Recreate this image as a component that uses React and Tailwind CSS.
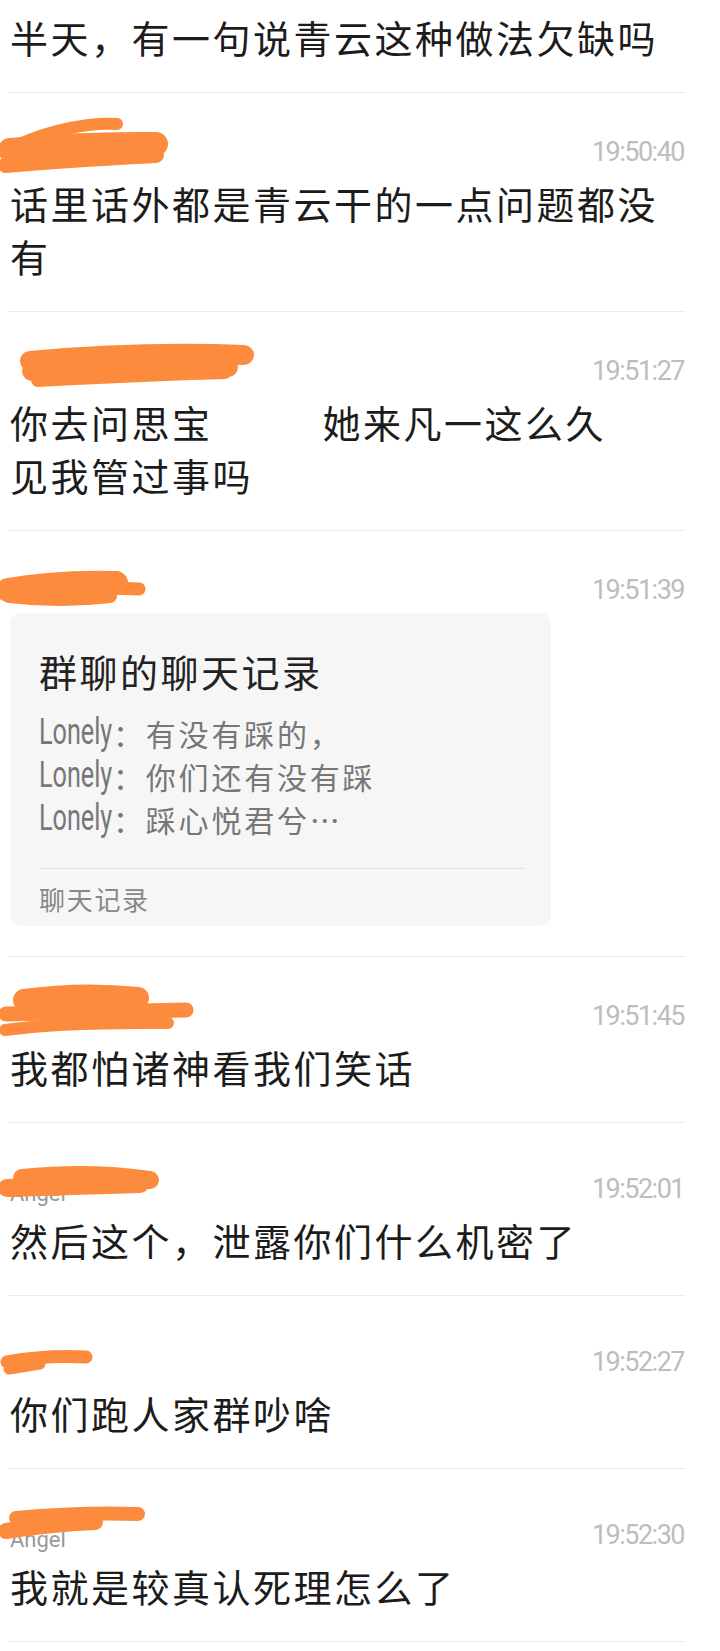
import React from 'react';

const ORANGE = '#fd8b3d';

// each scribble is drawn in a 260px wide box laid over the sender name
const scribbles = {
  a: {
    top: 'top-[-26px]',
    h: 80,
    strokes: [
      ['M117 14 C 90 12, 52 20, 22 33', 12],
      ['M10 40 Q 80 33 156 34', 24],
      ['M6 55 Q 60 50 156 45', 16],
    ],
  },
  b: {
    top: 'top-[-29px]',
    h: 80,
    strokes: [
      ['M30 35 Q 140 25 244 29', 20],
      ['M32 45 L 228 41', 20],
      ['M38 54 Q 130 49 225 46', 14],
    ],
  },
  c: {
    top: 'top-[-18px]',
    h: 70,
    strokes: [
      ['M8 34 Q 60 25 116 27', 24],
      ['M9 40 Q 60 46 110 40', 14],
      ['M110 32 L 139 33', 13],
    ],
  },
  d: {
    top: 'top-[-24px]',
    h: 80,
    strokes: [
      ['M24 24 Q 80 16 138 22', 22],
      ['M6 38 L 186 34', 15],
      ['M5 54 Q 60 46 168 47', 12],
      ['M60 46 L 150 44', 16],
    ],
  },
  e: {
    top: 'top-[-17px]',
    h: 60,
    strokes: [
      ['M22 22 Q 90 15 150 24', 18],
      ['M7 32 Q 70 30 140 28', 18],
    ],
  },
  f: {
    top: 'top-[-10px]',
    h: 60,
    strokes: [
      ['M7 26 Q 45 19 86 21', 13],
      ['M9 33 L 40 28', 11],
    ],
  },
  g: {
    top: 'top-[-28px]',
    h: 70,
    strokes: [
      ['M16 27 Q 80 21 138 23', 14],
      ['M6 40 Q 50 33 95 31', 16],
      ['M30 32 L 95 28', 14],
    ],
  },
};

function Scribble({ id }) {
  const s = scribbles[id];
  return (
    <svg
      className={`absolute left-[-8px] ${s.top} pointer-events-none`}
      width="260"
      height={s.h}
      viewBox={`0 0 260 ${s.h}`}
    >
      {s.strokes.map(([d, w], i) => (
        <path key={i} d={d} stroke={ORANGE} strokeWidth={w} strokeLinecap="round" fill="none" />
      ))}
    </svg>
  );
}

function Header({ time, scribble, name }) {
  return (
    <div className="relative h-[32px] flex items-center justify-between">
      <span className="pl-[2px] text-[22px] leading-none text-[#999] translate-y-[5px]">{name || ''}</span>
      <Scribble id={scribble} />
      <span className="text-[27px] tracking-[-1.5px] text-[#bdbdbd] leading-none pr-[1px]">{time}</span>
    </div>
  );
}

const msg = 'pl-[2px] text-[38px] tracking-[2.5px] leading-[53px] text-[#1c1c1c]';

function Entry({ time, scribble, name, lower, children }) {
  return (
    <div className={`border-b border-[#ebebeb] ${lower ? 'pt-[50px]' : 'pt-[43px]'} pb-[25px]`}>
      <Header time={time} scribble={scribble} name={name} />
      <div className={`mt-[12px] ${msg}`}>{children}</div>
    </div>
  );
}

function Lonely({ text }) {
  return (
    <div className="h-[43px] flex items-center text-[#777]">
      <span className="inline-block w-[74px] overflow-visible">
        <span className="inline-block origin-left scale-x-[0.7] text-[36px] leading-none font-['Roboto',sans-serif]">
          Lonely
        </span>
      </span>
      <span className="text-[30px] tracking-[2.8px] leading-none font-['Noto_Sans_CJK_SC',sans-serif]">：{text}</span>
    </div>
  );
}

export default function App() {
  const messages = [
    { time: '19:51:45', scribble: 'd', text: '我都怕诸神看我们笑话' },
    { time: '19:52:01', scribble: 'e', name: 'Angel', lower: true, text: '然后这个，泄露你们什么机密了' },
    { time: '19:52:27', scribble: 'f', lower: true, text: '你们跑人家群吵啥' },
    { time: '19:52:30', scribble: 'g', name: 'Angel', lower: true, text: '我就是较真认死理怎么了' },
  ];

  return (
    <div className="min-h-[1651px] bg-white font-['Roboto','Noto_Sans_CJK_SC',sans-serif]">
      <div className="ml-[8px] w-[677px]">
        {/* tail of the previous message */}
        <div className="border-b border-[#ebebeb] pt-[14px] pb-[25px]">
          <div className={msg}>半天，有一句说青云这种做法欠缺吗</div>
        </div>

        <Entry time="19:50:40" scribble="a">
          话里话外都是青云干的一点问题都没有
        </Entry>

        <Entry time="19:51:27" scribble="b">
          <div>
            你去问思宝<span className="inline-block w-[110px]"></span>她来凡一这么久
          </div>
          <div>见我管过事吗</div>
        </Entry>

        {/* forwarded chat record card */}
        <div className="border-b border-[#ebebeb] pt-[43px] pb-[30px]">
          <Header time="19:51:39" scribble="c" />
          <div className="mt-[7px] ml-[2px] w-[541px] h-[313px] rounded-[10px] bg-[#f6f6f6] pl-[29px] pr-[27px] pt-[37px]">
            <div className="text-[38px] tracking-[2.5px] leading-[48px] text-[#222]">群聊的聊天记录</div>
            <div className="mt-[13px]">
              <Lonely text="有没有踩的，" />
              <Lonely text="你们还有没有踩" />
              <Lonely text="踩心悦君兮…" />
            </div>
            <div className="mt-[28px] border-t border-[#e0e0e0]"></div>
            <div className="mt-[14px] text-[26px] tracking-[1.7px] leading-[36px] text-[#888]">聊天记录</div>
          </div>
        </div>

        {messages.map((m) => (
          <Entry key={m.time} time={m.time} scribble={m.scribble} name={m.name} lower={m.lower}>
            {m.text}
          </Entry>
        ))}
      </div>
    </div>
  );
}
